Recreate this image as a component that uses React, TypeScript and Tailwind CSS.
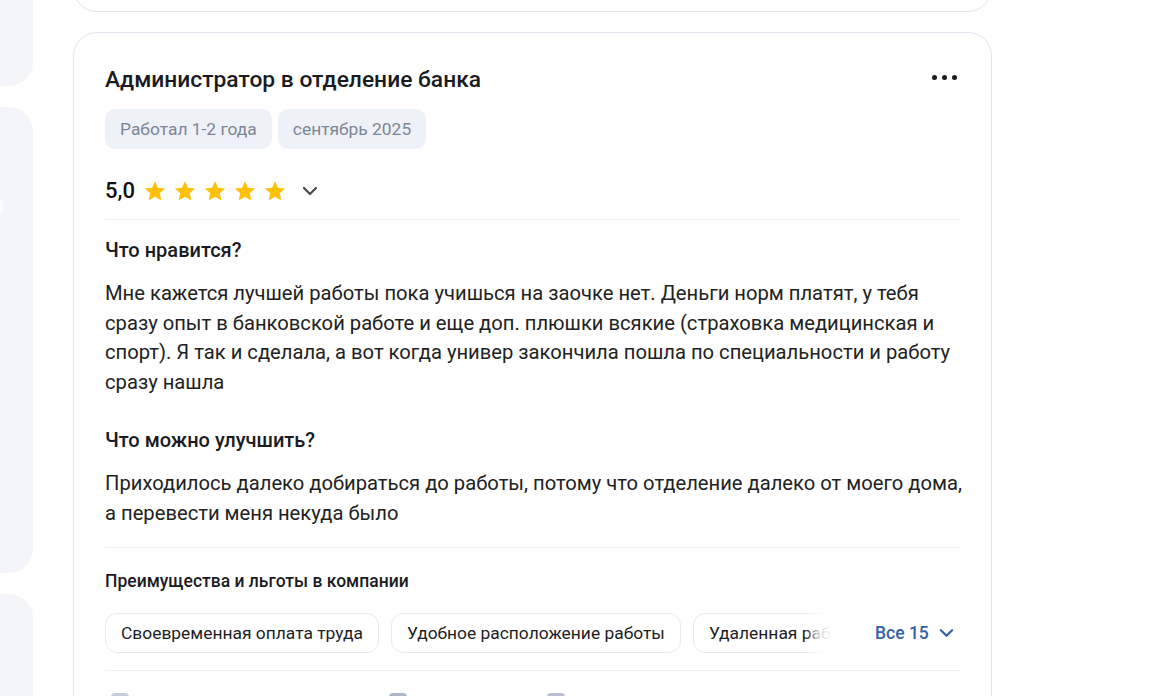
import React from "react";

const Star = () => (
  <svg width="24" height="24" viewBox="0 0 24 24" className="shrink-0">
    <path
      d="M12 2.2l2.95 6.62 7.2.72-5.4 4.83 1.56 7.08L12 17.8l-6.31 3.65 1.56-7.08-5.4-4.83 7.2-.72z"
      fill="#FFC107"
    />
  </svg>
);

const Chevron = ({ color = "#4a4a4a", w = 16, h = 10, sw = 2.2 }: { color?: string; w?: number; h?: number; sw?: number }) => (
  <svg width={w} height={h} viewBox="0 0 16 10" fill="none">
    <path d="M2 2l6 6 6-6" stroke={color} strokeWidth={sw} strokeLinecap="round" strokeLinejoin="round" />
  </svg>
);

export default function App() {
  const chips = ["Своевременная оплата труда", "Удобное расположение работы", "Удаленная работа", "ДМС"];
  return (
    <div
      className="min-h-[760px] w-full bg-white flex overflow-hidden"
      style={{ fontFamily: "Roboto, 'Noto Sans', sans-serif" }}
    >
      {/* left column */}
      <div className="w-[33px] shrink-0 flex flex-col gap-[21px]">
        <div className="h-[96px] bg-[#f4f5fa] rounded-br-[24px] mt-[-10px]" />
        <div className="relative h-[466px] bg-[#f4f5fa] rounded-r-[24px]">
          <div className="absolute left-[-20px] top-[88px] w-[24px] h-[24px] rounded-full bg-[#fafbfd]" />
        </div>
        <div className="h-[120px] bg-[#f4f5fa] rounded-tr-[24px]" />
      </div>

      {/* main column */}
      <div className="ml-[40px] w-[919px] shrink-0 flex flex-col">
        {/* previous card bottom */}
        <div className="h-[12px] overflow-hidden">
          <div className="h-[60px] mt-[-48px] bg-white border border-[#e1e5ed] rounded-b-[24px]" />
        </div>

        {/* card */}
        <div className="mt-[20px] bg-white border border-[#e1e5ed] rounded-[24px] px-[31px] pt-[32px] pb-[40px] text-[#1d1d1f]">
          <div className="flex items-start justify-between">
            <h2 className="text-[22.8px] leading-[30px] font-medium text-[#1b1b1f]">
              Администратор в отделение банка
            </h2>
            <div className="flex items-center gap-[5px] mr-[3px] mt-[10px]">
              <span className="w-[5px] h-[5px] rounded-full bg-[#1b1b1f]" />
              <span className="w-[5px] h-[5px] rounded-full bg-[#1b1b1f]" />
              <span className="w-[5px] h-[5px] rounded-full bg-[#1b1b1f]" />
            </div>
          </div>

          <div className="mt-[14px] flex gap-[6px]">
            <span className="h-[40px] px-[15px] flex items-center rounded-[10px] bg-[#eef1f7] text-[17.4px] text-[#7d8696]">
              Работал 1-2 года
            </span>
            <span className="h-[40px] px-[15px] flex items-center rounded-[10px] bg-[#eef1f7] text-[17.4px] text-[#7d8696]">
              сентябрь 2025
            </span>
          </div>

          <div className="mt-[26px] h-[32px] flex items-center">
            <span className="text-[22px] font-medium text-[#111] leading-none mr-[8px]">5,0</span>
            <div className="flex items-center gap-[6px]">
              <Star />
              <Star />
              <Star />
              <Star />
              <Star />
            </div>
            <span className="ml-[15px] flex items-center">
              <Chevron />
            </span>
          </div>

          <div className="mt-[12px] h-px bg-[#eef0f3]" />

          <h3 className="mt-[18px] text-[20px] leading-[24px] font-medium text-[#1b1b1f]">Что нравится?</h3>
          <p className="mt-[17px] text-[20.2px] leading-[29.7px] text-[#222] whitespace-nowrap">
            Мне кажется лучшей работы пока учишься на заочке нет. Деньги норм платят, у тебя
            <br />
            сразу опыт в банковской работе и еще доп. плюшки всякие (страховка медицинская и
            <br />
            спорт). Я так и сделала, а вот когда универ закончила пошла по специальности и работу
            <br />
            сразу нашла
          </p>

          <h3 className="mt-[30px] text-[20px] leading-[24px] font-medium text-[#1b1b1f]">Что можно улучшить?</h3>
          <p className="mt-[17px] text-[20.2px] leading-[29.7px] text-[#222] whitespace-nowrap">
            Приходилось далеко добираться до работы, потому что отделение далеко от моего дома,
            <br />
            а перевести меня некуда было
          </p>

          <div className="mt-[19px] h-px bg-[#eef0f3]" />

          <h4 className="mt-[21px] text-[17.5px] leading-[24px] font-medium text-[#1b1b1f]">
            Преимущества и льготы в компании
          </h4>

          <div className="mt-[20px] flex items-center">
            <div className="relative w-[728px] overflow-hidden">
              <div className="flex gap-[12px]">
                {chips.map((c) => (
                  <span
                    key={c}
                    className="shrink-0 h-[40px] px-[15px] flex items-center rounded-[12px] border border-[#e8eaf0] text-[17.4px] text-[#1d1d1f] whitespace-nowrap"
                  >
                    {c}
                  </span>
                ))}
              </div>
              <div className="absolute right-0 top-0 h-full w-[28px] bg-gradient-to-r from-white/0 via-white/80 to-white" />
            </div>
            <button className="ml-[42px] flex items-center gap-[10px] text-[17.5px] font-medium text-[#3461a8]">
              Все 15
              <Chevron color="#3461a8" w={15} h={10} sw={2.4} />
            </button>
          </div>

          <div className="mt-[17px] h-px bg-[#eef0f3]" />

          <div className="mt-[22px] flex items-center text-[#9aa3b5]">
            <span className="ml-[6px] w-[18px] h-[18px] rounded-[4px] bg-[#c7ccd8]" />
            <span className="ml-[260px] w-[18px] h-[18px] rounded-[4px] bg-[#aeb6c8]" />
            <span className="ml-[140px] w-[18px] h-[18px] rounded-[4px] bg-[#b7bfd0]" />
          </div>
        </div>
      </div>
    </div>
  );
}
